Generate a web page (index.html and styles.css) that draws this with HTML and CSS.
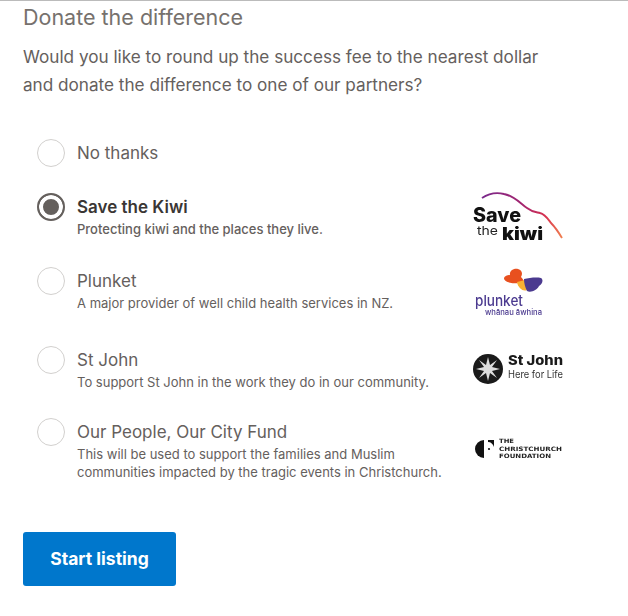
FILE: index.html
```html
<!DOCTYPE html>
<html lang="en">
<head>
  <meta charset="UTF-8" />
  <title>Donate the difference</title>
  <link rel="stylesheet" href="styles.css">
</head>
<body>
  <div class="donate">
    <h2>Donate the difference</h2>
    <p class="intro">Would you like to round up the success fee to the nearest dollar and donate the difference to one of our partners?</p>

    <div class="options">
      <div class="option no-thanks">
        <span class="radio"></span>
        <div class="text">
          <div class="name">No thanks</div>
        </div>
      </div>

      <div class="option kiwi selected">
        <span class="radio"></span>
        <div class="text">
          <div class="name">Save the Kiwi</div>
          <div class="desc">Protecting kiwi and the places they live.</div>
        </div>
        <svg class="logo" width="92" height="50" viewBox="0 0 92 50">
          <defs>
            <linearGradient id="kiwigrad" x1="0" y1="0" x2="1" y2="0">
              <stop offset="0" stop-color="#7a2a8c" />
              <stop offset="0.5" stop-color="#a3246f" />
              <stop offset="0.8" stop-color="#d8334f" />
              <stop offset="1" stop-color="#f08050" />
            </linearGradient>
          </defs>
          <path d="M11 5 C17 1 25 -1 33 1 C44 3 50 11 56 15 C61 19 65 19 69 20 C74 21 77 26 80 30 C84 34 88 40 91 45" fill="none" stroke="url(#kiwigrad)" stroke-width="1.9" />
          <text x="2" y="29" class="kiwi-save" textLength="48" lengthAdjust="spacingAndGlyphs">Save</text>
          <text x="6" y="42" class="kiwi-the" textLength="21" lengthAdjust="spacingAndGlyphs">the</text>
          <text x="31" y="47" class="kiwi-word" textLength="41" lengthAdjust="spacingAndGlyphs">kiwi</text>
        </svg>
      </div>

      <div class="option plunket">
        <span class="radio"></span>
        <div class="text">
          <div class="name">Plunket</div>
          <div class="desc">A major provider of well child health services in NZ.</div>
        </div>
        <svg class="logo" width="92" height="50" viewBox="0 0 92 50">
          <path d="M33 12 C33 9 36 8 39 8 C38 3 44 1 47 2 C51 3 52 7 50 10 C52 12 53 14 53 15 C47 17 35 17 33 12 Z" fill="#e8501f" />
          <path d="M46 15 L54 13 L56 23 C52 25 47 21 46 15 Z" fill="#f8b133" />
          <path d="M53 12 C58 11 65 10 70 11 C73 13 71 17 68 19 C66 23 60 26 56 24 C54 20 53 16 53 12 Z" fill="#4b3a8f" />
          <text x="4" y="39" class="plunket-word" textLength="48" lengthAdjust="spacingAndGlyphs">plunket</text>
          <text x="14" y="48" class="plunket-sub" textLength="57" lengthAdjust="spacingAndGlyphs">whānau āwhina</text>
        </svg>
      </div>

      <div class="option stjohn">
        <span class="radio"></span>
        <div class="text">
          <div class="name">St John</div>
          <div class="desc">To support St John in the work they do in our community.</div>
        </div>
        <svg class="logo" width="92" height="50" viewBox="0 0 92 50">
          <circle cx="17" cy="23" r="15" fill="#1a1a1a" />
          <path d="M17 11 L19 19 L26 14 L21 21 L29 23 L21 25 L26 32 L19 27 L17 35 L15 27 L8 32 L13 25 L5 23 L13 21 L8 14 L15 19 Z" fill="#ddd" />
          <text x="37" y="19" class="john-word" textLength="55" lengthAdjust="spacingAndGlyphs">St John</text>
          <text x="37" y="32" class="john-sub" textLength="55" lengthAdjust="spacingAndGlyphs">Here for Life</text>
        </svg>
      </div>

      <div class="option city">
        <span class="radio"></span>
        <div class="text">
          <div class="name">Our People, Our City Fund</div>
          <div class="desc">This will be used to support the families and Muslim communities impacted by the tragic events in Christchurch.</div>
        </div>
        <svg class="logo" width="92" height="50" viewBox="0 0 92 50">
          <path d="M13 22 A9 9 0 0 0 13 40 Z" fill="#111" />
          <path d="M17 22 H23 V29 C22 26 20 24 17 24 Z" fill="#111" />
          <circle cx="18" cy="31" r="1.1" fill="#111" />
          <text x="28" y="25" class="found-word" textLength="15" lengthAdjust="spacingAndGlyphs">THE</text>
          <text x="28" y="33" class="found-word" textLength="63" lengthAdjust="spacingAndGlyphs">CHRISTCHURCH</text>
          <text x="28" y="40" class="found-word" textLength="52" lengthAdjust="spacingAndGlyphs">FOUNDATION</text>
        </svg>
      </div>
    </div>

    <button class="start">Start listing</button>
  </div>
</body>
</html>
```

FILE: styles.css
```css
body { margin: 0; background: #fff; font-family: "Inter", "Liberation Sans", sans-serif; color: #65605d; }
.donate { border-top: 1px solid #bbb; padding: 0 23px 30px; }
h2 { font-size: 21.5px; font-weight: 400; line-height: 32px; margin: 0 0 10px; color: #76716d; }
.intro { font-size: 17.15px; line-height: 28px; margin: 0 0 40px; width: 540px; }
.options { padding-left: 14px; width: 526px; }
.option { display: flex; align-items: flex-start; }
.radio { box-sizing: border-box; width: 28px; height: 28px; border: 1px solid #d2d0ce; border-radius: 50%; background: #fff; margin-right: 12px; flex: none; }
.selected .radio { border: 2px solid #65605d; background: #65605d; box-shadow: inset 0 0 0 4px #fff; }
.text { flex: 1; }
.name { font-size: 17px; line-height: 28px; }
.selected .name { font-weight: 600; color: #3a3634; }
.desc { font-size: 13px; line-height: 18px; width: 372px; margin-top: -1px; }
.selected .desc { font-weight: 500; }
.no-thanks { height: 54px; }
.kiwi { height: 74px; }
.plunket { height: 79px; }
.stjohn { height: 72px; }
.city { height: 63px; }
.logo { flex: none; overflow: visible; filter: blur(0.4px); }
.kiwi-save { font-size: 20px; font-weight: 800; fill: #111; }
.kiwi-the { font-size: 12px; fill: #222; }
.kiwi-word { font-size: 17px; font-weight: 900; fill: #111; }
.plunket-word { font-size: 15px; font-weight: 500; fill: #4b3a8f; }
.plunket-sub { font-size: 8px; font-weight: 500; fill: #4b3a8f; }
.john-word { font-size: 13px; font-weight: 800; fill: #1a1a1a; }
.john-sub { font-size: 10.5px; fill: #333; }
.found-word { font-family: "DejaVu Sans", sans-serif; font-size: 6px; font-weight: 700; fill: #222; }
.start { display: block; margin-top: 51px; width: 153px; height: 54px; padding: 0 0 2px; background: #0077cc; color: #fff; border: none; border-radius: 3px; font-family: inherit; font-size: 17.5px; font-weight: 700; }
```
